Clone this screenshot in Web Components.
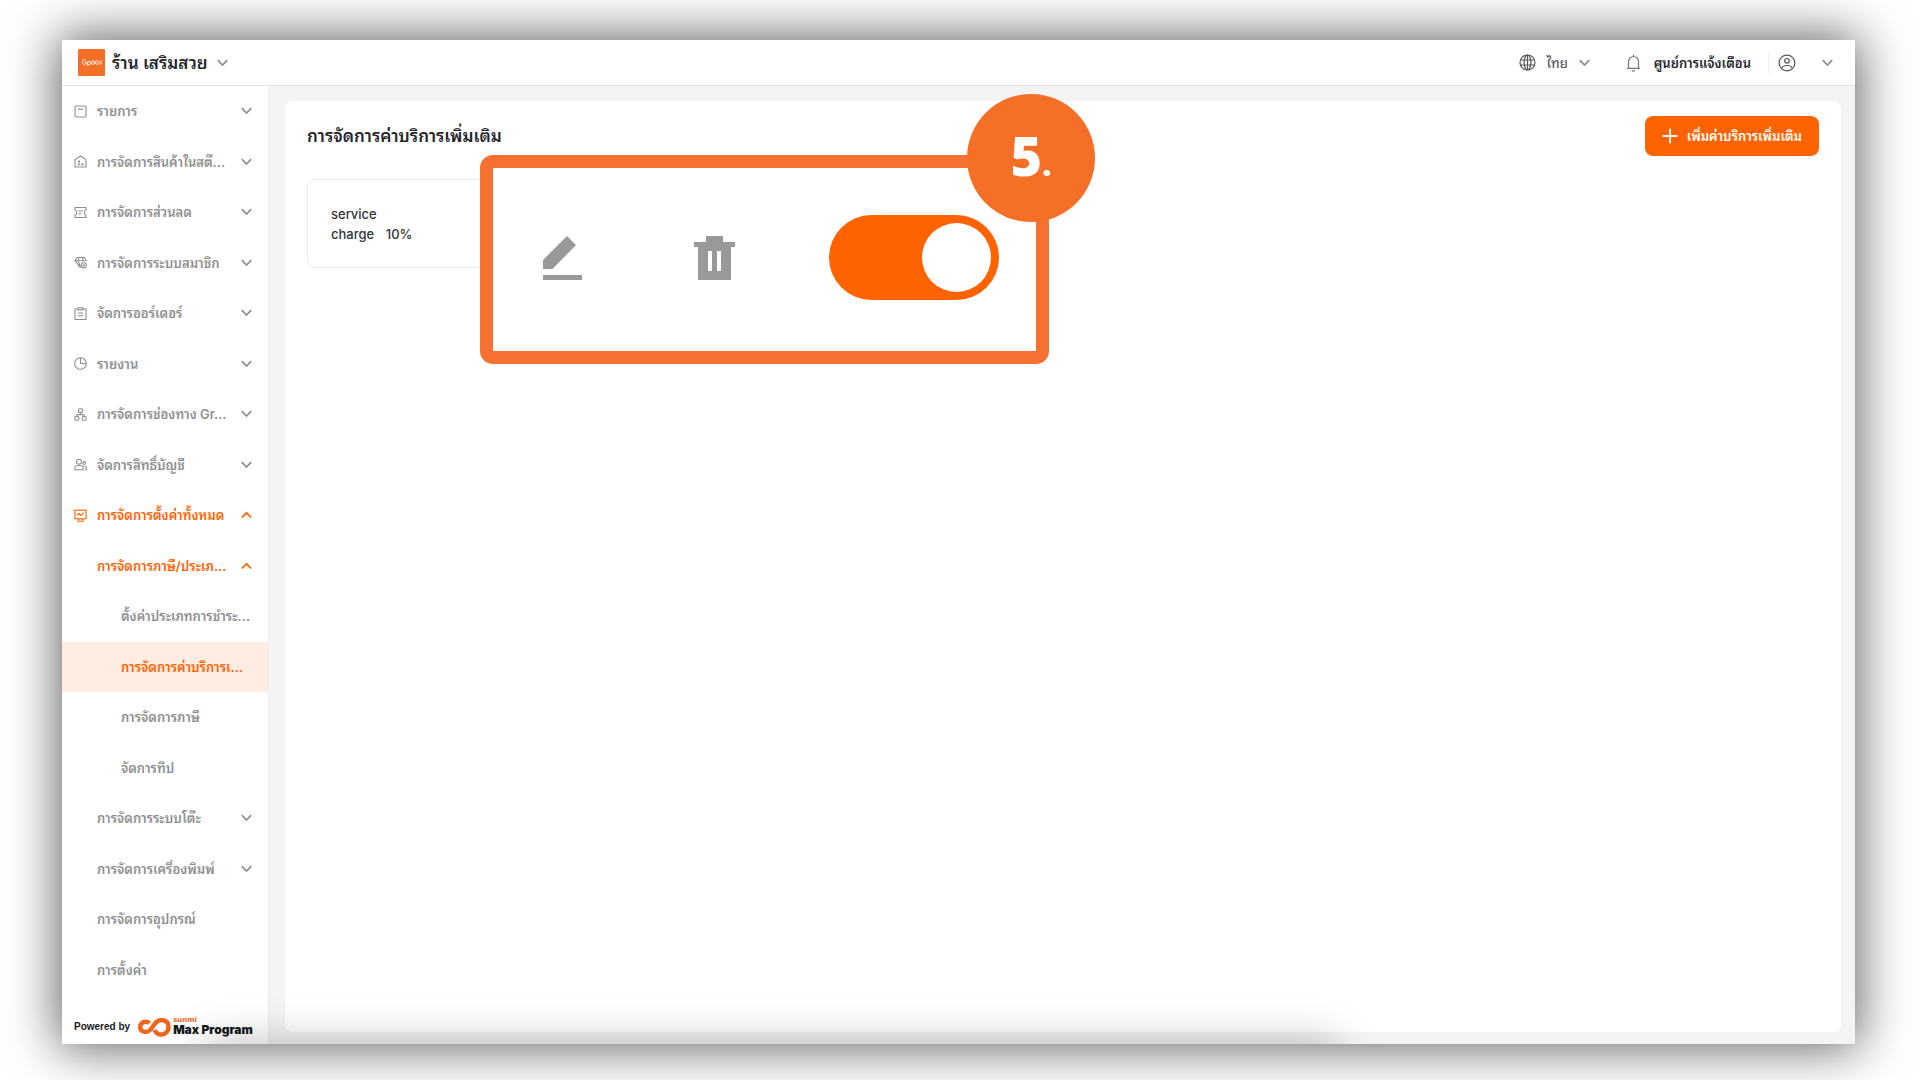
<!DOCTYPE html>
<html lang="th">
<head>
<meta charset="utf-8">
<title>การจัดการค่าบริการเพิ่มเติม</title>
<style>
  body { margin: 0; background: #fff; font-family: Inter, "Noto Sans Thai Looped", "Noto Sans", sans-serif; color: #25262b; }
</style>
</head>
<body>
<pos-window>
  <pos-header slot="header"></pos-header>
  <pos-sidebar slot="sidebar">
    <pos-item icon="bag" chevron="down">รายการ</pos-item>
    <pos-item icon="stock" chevron="down">การจัดการสินค้าในสต๊...</pos-item>
    <pos-item icon="ticket" chevron="down">การจัดการส่วนลด</pos-item>
    <pos-item icon="gem" chevron="down">การจัดการระบบสมาชิก</pos-item>
    <pos-item icon="order" chevron="down">จัดการออร์เดอร์</pos-item>
    <pos-item icon="report" chevron="down">รายงาน</pos-item>
    <pos-item icon="channel" chevron="down">การจัดการช่องทาง Gr...</pos-item>
    <pos-item icon="users" chevron="down">จัดการสิทธิ์บัญชี</pos-item>
    <pos-item icon="settings" chevron="up" active>การจัดการตั้งค่าทั้งหมด</pos-item>
    <pos-item level="1" chevron="up" active>การจัดการภาษี/ประเภ...</pos-item>
    <pos-item level="2">ตั้งค่าประเภทการชำระ...</pos-item>
    <pos-item level="2" active current>การจัดการค่าบริการเ...</pos-item>
    <pos-item level="2">การจัดการภาษี</pos-item>
    <pos-item level="2">จัดการทิป</pos-item>
    <pos-item level="1" chevron="down">การจัดการระบบโต๊ะ</pos-item>
    <pos-item level="1" chevron="down">การจัดการเครื่องพิมพ์</pos-item>
    <pos-item level="1">การจัดการอุปกรณ์</pos-item>
    <pos-item level="1">การตั้งค่า</pos-item>
  </pos-sidebar>
  <pos-panel>
    <span slot="title">การจัดการค่าบริการเพิ่มเติม</span>
    <charge-card><span slot="name">service<br>charge</span><span slot="rate">10%</span></charge-card>
    <step-callout slot="callout"><span>5</span><small slot="dot">.</small></step-callout>
  </pos-panel>
</pos-window>

<script>
const CHEVRON = {
  down: '<svg class="chev" width="11" height="8" viewBox="0 0 11 8" fill="none" stroke="currentColor" stroke-width="1.7" aria-hidden="true"><path d="M.8 1.2 5.5 6 10.2 1.2"/></svg>',
  up: '<svg class="chev" width="11" height="8" viewBox="0 0 11 8" fill="none" stroke="currentColor" stroke-width="1.7" aria-hidden="true"><path d="M.8 6.5 5.5 1.8 10.2 6.5"/></svg>'
};
const ICONS = {
  bag: '<rect x="1" y="1" width="11" height="11" rx="1"/><path d="M4.2 3.2c.6 2 4 2 4.6 0"/>',
  stock: '<path d="M1 12V4.600L6.500 1 12 4.600V12z"/><path d="M4 6.500h2M4 9.300h2M7.200 9.300h2.300" stroke-width="1.800"/>',
  ticket: '<path d="M1 1.500h11v2.300c-2.200.8-2.200 4.600 0 5.400v2.300H1V9.200c2.200-.8 2.200-4.600 0-5.400z"/><path d="M4.300 5h4.700M4.300 7.800h3.200"/>',
  gem: '<path d="M6.500 11.800 1 4.800 3 1.500h7.500l2 3.300M1 4.800h11.500M4.200 4.800l2.300 7M4.800 1.500l-.6 3.300M8.500 1.500l.5 3.300"/><circle cx="9.700" cy="9.300" r="2.600"/><circle cx="9.700" cy="9.300" r=".6"/>',
  order: '<path d="M4 2H1v10.500h11V2H9"/><rect x="4" y=".8" width="5" height="2"/><path d="M3.800 6h5.400M3.800 8.800h5.400"/>',
  report: '<circle cx="6.500" cy="6.500" r="5.800"/><path d="M6.500.7v5.800h5.800"/>',
  channel: '<rect x="4.500" y=".8" width="4" height="3.600" rx="1"/><path d="M6.500 4.400v2.200M3 8.600v-2h7v2"/><rect x=".8" y="8.600" width="4" height="3.600" rx="1"/><rect x="8.200" y="8.600" width="4" height="3.600" rx="1"/>',
  users: '<circle cx="5" cy="3.800" r="2.500"/><path d="M.8 11.800V9.500c0-1.200.8-1.800 2-1.800h4.400c1.200 0 2 .6 2 1.800v2.300z"/><circle cx="10.200" cy="5" r="1.400"/><path d="M10.200 8.200c1.400 0 2.200.5 2.200 1.600v2h-1.500"/>',
  settings: '<rect x=".9" y="1.200" width="11.200" height="8.600"/><path d="M3.200 6.500 5 4.300l2 2.200 2.800-2.800M5 9.800 4.200 11.500M8 9.800l.8 1.700M3.200 12.300h6.600"/>'
};

function define(name, css, html) {
  const template = document.createElement('template');
  customElements.define(name, class extends HTMLElement {
    constructor() {
      super();
      this.attachShadow({ mode: 'open' });
    }
    connectedCallback() {
      template.innerHTML = '<style>*{box-sizing:border-box}svg{display:block;flex:none}button{font:inherit;color:inherit;background:none;border:0;padding:0;cursor:pointer}' + css + '</style>' + (typeof html === 'function' ? html(this) : html);
      this.shadowRoot.replaceChildren(template.content.cloneNode(true));
    }
  });
}

define('pos-window', `
  :host { display: flex; box-sizing: border-box; min-height: 100vh; padding: 40px 65px 36px 62px; overflow: hidden; }
  .frame { flex: 1; display: flex; flex-direction: column; position: relative; background: #f4f4f4; box-shadow: 0 0 48px 4px rgba(0,0,0,.62); }
  .body { flex: 1; display: flex; }
  main { flex: 1; display: flex; padding: 15px 14px 12px 16px; }
  .haze { position: absolute; inset: auto 0 0 0; height: 60px; overflow: hidden; pointer-events: none; }
  .haze::after { content: ""; position: absolute; top: 100%; left: 8%; right: 29%; height: 40px; box-shadow: 0 0 44px 2px rgba(0,0,0,.26); }
`, `
  <div class="frame">
    <slot name="header"></slot>
    <div class="body"><slot name="sidebar"></slot><main><slot></slot></main></div>
    <div class="haze"></div>
  </div>
`);

define('pos-header', `
  :host { display: flex; box-sizing: border-box; height: 46px; align-items: center; justify-content: space-between; padding: 0 22px 0 16px; background: #fff; border-bottom: 1px solid #e3e3e3; }
  div, button { display: flex; align-items: center; }
  .shop { font-size: 17px; font-weight: 600; line-height: 26px; }
  .logo { margin-right: 7px; }
  .chev { color: #8a8b8e; }
  .shop .chev { margin-left: 9px; }
  .right { font-size: 13px; line-height: 22px; }
  .lang { gap: 11px; color: #55565a; font-weight: 500; margin-right: 36px; }
  .notice { gap: 13px; font-weight: 600; padding-right: 17px; border-right: 1px solid #eee; margin-right: 9px; }
  .user { gap: 26px; }
`, `
  <button class="shop">
    <svg class="logo" width="27" height="27" viewBox="0 0 27 27" role="img" aria-label="Gpos"><rect width="27" height="27" rx="1" fill="#f56f26"/><g fill="none" stroke="#fff" stroke-width=".9"><path d="M8 11.300a2.300 2.300 0 1 0 .2 3.200v-1.300H6.500M9.700 12.500v4.300M9.700 13.800a1.600 1.600 0 1 1 .2 1.200"/><circle cx="15" cy="13.600" r="1.700"/><circle cx="19" cy="13.600" r="1.700"/><path d="M23.700 12.100c-2-.5-2.500 1.300-1 1.500s1 2-1 1.600"/></g></svg>
    <span>ร้าน เสริมสวย</span>${CHEVRON.down}
  </button>
  <div class="right">
    <button class="lang">
      <svg width="17" height="17" viewBox="0 0 17 17" fill="none" stroke="#55565a" stroke-width="1.200"><circle cx="8.500" cy="8.500" r="7.500"/><ellipse cx="8.500" cy="8.500" rx="3.400" ry="7.500"/><path d="M1.700 6h13.600M1.700 11h13.600M8.500 1v15"/></svg>
      <span>ไทย</span>${CHEVRON.down}
    </button>
    <button class="notice">
      <svg width="15" height="18" viewBox="0 0 15 18" fill="none" stroke="#77787b" stroke-width="1.200"><path d="M1 14.300h13M2.500 14.300V7.500a5 5 0 0 1 10 0v6.800M7.500 2.500V.8M6 16.800h3"/></svg>
      <span>ศูนย์การแจ้งเตือน</span>
    </button>
    <button class="user" aria-label="บัญชี">
      <svg width="18" height="18" viewBox="0 0 18 18" fill="none" stroke="#55565a" stroke-width="1.200"><circle cx="9" cy="9" r="7.900"/><circle cx="9" cy="6.800" r="2.300"/><path d="M3.800 14.500c.6-4 9.800-4 10.400 0"/></svg>
      ${CHEVRON.down}
    </button>
  </div>
`);

define('pos-sidebar', `
  :host { display: flex; flex-direction: column; width: 207px; flex: none; background: #fff; border-right: 1px solid #eee; box-sizing: border-box; }
  nav { flex: 1; display: flex; flex-direction: column; }
  footer { height: 49px; display: flex; align-items: center; padding: 14px 11px 0 12px; color: #17181c; }
  .by { font: 700 10px/14px "Liberation Sans", sans-serif; margin-right: 8px; white-space: nowrap; }
  .name { display: flex; flex-direction: column; margin-left: 2px; }
  .brand { font: 700 7px/7px "DejaVu Sans", sans-serif; color: #f0641e; }
  .product { font: 900 12px/12px Inter, sans-serif; white-space: nowrap; }
`, `
  <nav><slot></slot></nav>
  <footer>
    <span class="by">Powered by</span>
    <svg width="33" height="20" viewBox="0 0 33 20" fill="none" stroke="#f0641e" stroke-width="4.400" aria-hidden="true"><path d="M11.500 6.200C8 3.200 2.200 5.200 2.200 10c0 4.800 6.500 7 10.300 2.600l4-5.400C20.500 1 30.500 2 30.500 10c0 8.500-11 10-14 3"/></svg>
    <span class="name"><span class="brand">sunmi</span><span class="product">Max Program</span></span>
  </footer>
`);

define('pos-item', `
  :host { flex: 1; display: flex; color: #8e8f91; font-size: 13px; line-height: 24px; font-weight: 600; }
  :host([active]) { color: #ff6300; }
  :host([current]) { background: #ffede3; }
  a { flex: 1; display: flex; align-items: center; padding: 0 16px 0 12px; color: inherit; text-decoration: none; white-space: nowrap; }
  :host([level="1"]) a { padding-left: 35px; }
  :host([level="2"]) a { padding-left: 59px; padding-right: 8px; }
  .icon { margin-right: 10px; }
  span { flex: 1; }
`, el => {
  const icon = ICONS[el.getAttribute('icon')];
  return `<a href="#">${icon ? `<svg class="icon" width="13" height="13" viewBox="0 0 13 13" fill="none" stroke="currentColor" stroke-width="1.1">${icon}</svg>` : ''}<span><slot></slot></span>${CHEVRON[el.getAttribute('chevron')] || ''}</a>`;
});

define('pos-panel', `
  :host { flex: 1; display: block; position: relative; background: #fff; border-radius: 8px; padding: 15px 22px; }
  header { display: flex; justify-content: space-between; align-items: center; height: 40px; margin-bottom: 23px; }
  h1 { margin: 0; font-size: 17px; line-height: 28px; font-weight: 600; }
  .add { display: flex; align-items: center; gap: 9px; height: 40px; padding: 0 17px; background: #ff6300; color: #fff; border-radius: 8px; font-size: 13px; line-height: 22px; font-weight: 600; }
`, `
  <header>
    <h1><slot name="title"></slot></h1>
    <button class="add"><svg width="16" height="16" viewBox="0 0 16 16" stroke="#fff" stroke-width="1.800"><path d="M8 .5v15M.5 8h15"/></svg><span>เพิ่มค่าบริการเพิ่มเติม</span></button>
  </header>
  <slot></slot>
  <slot name="callout"></slot>
`);

define('charge-card', `
  :host { display: flex; box-sizing: border-box; width: 360px; height: 89px; align-items: center; padding: 0 23px; border: 1px solid #ececec; border-radius: 8px; font-size: 13px; line-height: 20px; font-weight: 500; color: #333438; }
  div { display: flex; align-items: flex-end; gap: 9px; }
`, `<div><slot name="name"></slot><slot name="rate"></slot></div>`);

define('step-callout', `
  :host { position: absolute; left: 195px; top: 54px; width: 569px; height: 209px; display: flex; box-sizing: border-box; align-items: center; padding: 0 37px 4px 50px; border: 13px solid #f57031; border-radius: 13px; background: #fff; }
  .trash { margin: 0 auto 0 112px; }
  input { appearance: none; margin: 0; width: 170px; height: 85px; border-radius: 43px; background: #ff6300; display: flex; justify-content: flex-end; align-items: center; padding: 0 8px; }
  input::before { content: ""; width: 69px; height: 69px; border-radius: 50%; background: #fff; }
  .badge { position: absolute; right: -59px; top: -74px; width: 128px; height: 128px; border-radius: 50%; background: #f56f26; color: #fff; display: flex; justify-content: center; align-items: baseline; font: 800 54px/122px "Open Sans", sans-serif; }
  ::slotted(small) { font-size: 32px; }
`, `
  <button aria-label="แก้ไข"><svg width="39" height="44" viewBox="0 0 39 44" fill="#98999b"><path d="M0 24 24 0l9 9L9.500 33H0zM0 39h39v5H0z"/></svg></button>
  <button class="trash" aria-label="ลบ"><svg width="41" height="44" viewBox="0 0 41 44" fill="#98999b" fill-rule="evenodd"><path d="M12 0h17v6h12v5h-4v33H4V11H0V6h12zM14 15v20h4V15zM23 15v20h4V15z"/></svg></button>
  <input type="checkbox" role="switch" checked aria-label="เปิดใช้งาน">
  <div class="badge"><slot></slot><slot name="dot"></slot></div>
`);
</script>
</body>
</html>
